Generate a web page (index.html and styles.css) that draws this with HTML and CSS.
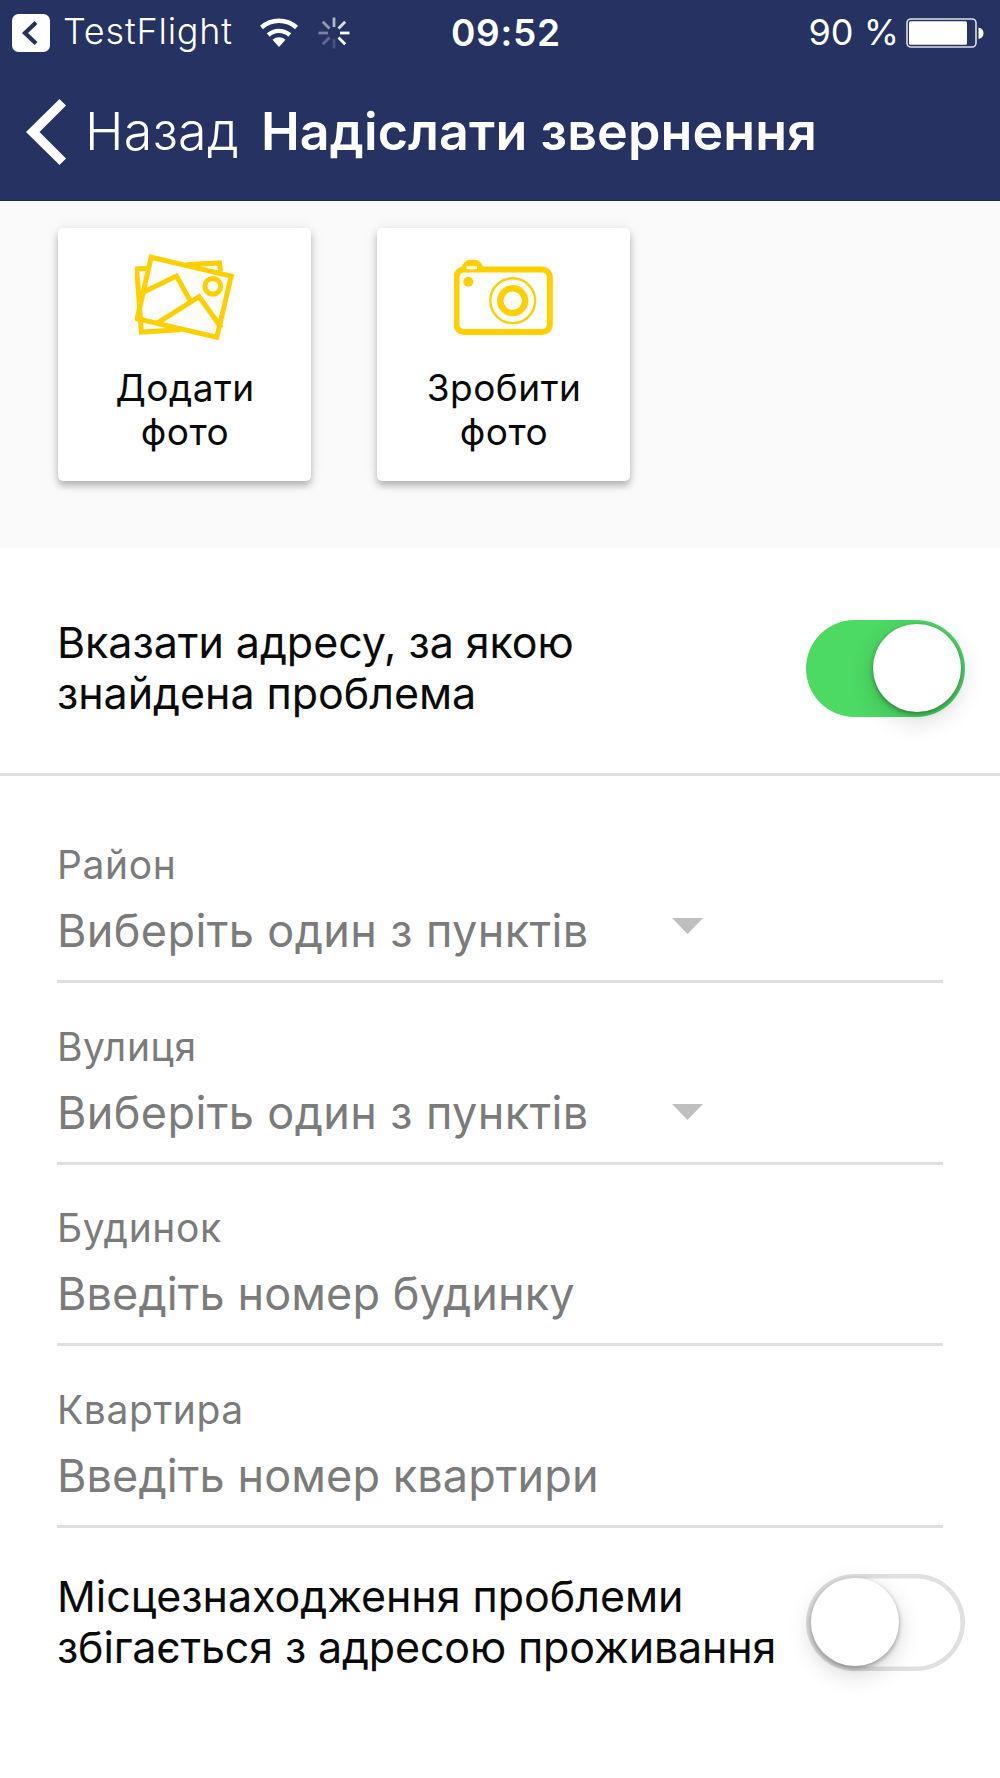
FILE: index.html
```html
<!DOCTYPE html>
<html lang="uk">
<head>
<meta charset="utf-8">
<title>Надіслати звернення</title>
<link rel="stylesheet" href="styles.css">
</head>
<body>
<div id="wrap">
    <div class="header">
        <div class="status">
            <div class="status-left">
                <svg class="back-app" viewBox="0 0 38 38"><rect width="38" height="38" rx="6.5" fill="#fff"/><path d="M24 8.5 L13 19 L24 29.5" fill="none" stroke="#253262" stroke-width="4.2"/></svg>
                <span class="app-name">TestFlight</span>
                <svg class="wifi" viewBox="0 0 40 30"><path d="M2.5 9.5 A26.2 26.2 0 0 1 37.5 9.5 M9.2 17 A16.2 16.2 0 0 1 30.8 17" fill="none" stroke="#fff" stroke-width="4.4"/><path d="M20 29 L13.5 21.7 A9.8 9.8 0 0 1 26.5 21.7 Z" fill="#fff"/></svg>
                <svg class="spinner" viewBox="-16 -16 32 32">
                    <g stroke="#fff" stroke-width="2.8">
                        <path d="M6 0 H15.5"/>
                        <path d="M4.5 4.5 L11.2 11.2"/>
                        <path d="M0 6 V15.5" opacity=".15"/>
                        <path d="M-4.5 4.5 L-11.2 11.2" opacity=".28"/>
                        <path d="M-6 0 H-15.5" opacity=".4"/>
                        <path d="M-4.5 -4.5 L-11.2 -11.2" opacity=".5"/>
                        <path d="M0 -6 V-15.5" opacity=".65"/>
                        <path d="M4.5 -4.5 L11.2 -11.2" opacity=".85"/>
                    </g>
                </svg>
            </div>
            <div class="time">09:52</div>
            <div class="status-right">
                <span>90 %</span>
                <svg class="battery" viewBox="0 0 78 30"><rect x="1" y="1" width="69" height="28" rx="4" fill="none" stroke="#fff" stroke-opacity=".85" stroke-width="1.6"/><rect x="3" y="3.2" width="58" height="23.6" rx="1.5" fill="#fff"/><path d="M72.5 9.5 Q77.5 10.5 77.5 15.2 Q77.5 20 72.5 21 Z" fill="#fff"/></svg>
            </div>
        </div>
        <div class="nav">
            <svg class="nav-arrow" viewBox="0 0 40 66"><path d="M33.5 0 L40 6.5 L13.5 33 L40 59.5 L33.5 66 L0 33 Z" fill="#fff"/></svg>
            <span class="nav-back">Назад</span>
            <span class="nav-title">Надіслати звернення</span>
        </div>
    </div>

    <div class="photos">
        <div class="card">
            <svg viewBox="0.5 -1 100 88" fill="none" stroke="#ffcf00" stroke-width="5">
                <path d="M16.7 2.3 L96.7 21 L82.3 82.2 L2.7 63.7 Z"/>
                <path d="M13 13.3 L2.2 14 L6.9 77 L46 74.8"/>
                <path d="M51.7 9.7 L85 7.9 L86 16"/>
                <path d="M7.7 37.7 L42 21 L55.7 45.7"/>
                <path d="M22.3 68.3 L64.7 41.7 L87 73"/>
                <circle cx="78.3" cy="31.3" r="7.9"/>
            </svg>
            <div class="card-label">Додати<br>фото</div>
        </div>
        <div class="card">
            <svg viewBox="0.5 0 100 88" fill="none" stroke="#ffcf00">
                <rect x="3" y="15.4" width="93.3" height="62.6" rx="7.5" stroke-width="6"/>
                <path d="M7 15.5 Q10 5.8 17 5.8 H21.5 Q28 6 30.5 15.5 Z" fill="#ffcf00" stroke="none"/>
                <rect x="13" y="12.3" width="10.5" height="3" fill="#fff" stroke="none"/>
                <circle cx="14.8" cy="27.7" r="5" fill="#ffcf00" stroke="none"/>
                <circle cx="59.2" cy="46.7" r="22.4" stroke-width="2.4"/>
                <circle cx="59.2" cy="46.7" r="12.4" stroke-width="6.4"/>
            </svg>
            <div class="card-label">Зробити<br>фото</div>
        </div>
    </div>

    <div class="row row-address">
        <div class="row-text">Вказати адресу, за якою<br>знайдена проблема</div>
        <div class="switch on"><div class="knob"></div></div>
    </div>

    <div class="fields">
        <div class="field">
            <div class="label">Район</div>
            <div class="value"><span class="choice">Виберіть один з пунктів</span><svg class="arrow" viewBox="0 0 31 16"><path d="M0 0 H31 L15.5 16 Z" fill="#bfbfbf"/></svg></div>
        </div>
        <div class="field">
            <div class="label">Вулиця</div>
            <div class="value"><span class="choice">Виберіть один з пунктів</span><svg class="arrow arrow-low" viewBox="0 0 31 16"><path d="M0 0 H31 L15.5 16 Z" fill="#bfbfbf"/></svg></div>
        </div>
        <div class="field">
            <div class="label">Будинок</div>
            <div class="value">Введіть номер будинку</div>
        </div>
        <div class="field">
            <div class="label">Квартира</div>
            <div class="value">Введіть номер квартири</div>
        </div>
    </div>

    <div class="row row-live">
        <div class="row-text">Місцезнаходження проблеми<br><span class="tight">збігається з адресою проживання</span></div>
        <div class="switch"><div class="knob"></div></div>
    </div>
</div>
</body>
</html>
```

FILE: styles.css
```css
* {box-sizing: border-box;}
body {margin: 0; background: #fff; font-family: Inter, "Liberation Sans", sans-serif; color: #0a0a0a;}
svg {display: block; flex: none;}
#wrap {width: 1000px; height: 1778px; overflow: hidden;}

.header {height: 201px; background: #253262; color: #fff; border-bottom: 1px solid #1b2555;}
.status {display: grid; grid-template-columns: 439px 110px 1fr; height: 63px; padding: 0 16px 0 12px; white-space: nowrap;}
.status-left {display: flex; align-items: center;}
.back-app {width: 38px; height: 38px;}
.app-name {width: 172px; margin-left: 13px; padding-bottom: 3px; font-size: 36px; font-weight: 350; letter-spacing: 0.8px;}
.wifi {width: 40px; height: 30px; margin-left: 24px;}
.spinner {width: 32px; height: 32px; margin-left: 19px;}
.time {font-size: 37px; line-height: 65px; font-weight: 600; letter-spacing: 0.7px;}
.status-right {display: flex; align-items: center; justify-content: flex-end; gap: 7px; font-size: 36px; line-height: 65px;}
.battery {width: 78px; height: 30px;}

.nav {display: flex; align-items: center; height: 137px; padding-left: 26px; font-size: 52px; white-space: nowrap;}
.nav-arrow {width: 40px; height: 66px;}
.nav-back {width: 176px; margin-left: 19px; font-weight: 330; letter-spacing: 0.3px;}
.nav-title {font-weight: 600; letter-spacing: 0.1px;}

.photos {display: flex; gap: 66px; height: 347px; padding: 27px 58px 0; background: #fafafa;}
.card {display: flex; flex-direction: column; align-items: center; width: 253px; height: 253px; padding-top: 26px; background: #fff; border-radius: 5px; box-shadow: 0 5px 7px rgba(0,0,0,0.25), 0 0 14px rgba(0,0,0,0.08);}
.card svg {width: 100px; height: 88px;}
.card-label {margin-top: 24px; padding-left: 1px; font-size: 37px; line-height: 44px; letter-spacing: 0.5px; text-align: center;}

.row {display: flex; justify-content: space-between; align-items: center; padding-left: 57px; padding-right: 35px;}
.row-text {font-size: 43px; line-height: 51.5px; white-space: nowrap; letter-spacing: -0.05px;}
.tight {letter-spacing: -0.15px;}
.row-address {height: 228px; padding-top: 15px; border-bottom: 3px solid #e0e0e0;}
.row-live {padding-top: 43px;}

.switch {width: 159px; height: 97px; padding: 4.5px; border-radius: 49px; box-shadow: inset 0 0 0 4.5px #e0e0e0;}
.knob {width: 88px; height: 88px; border-radius: 50%; background: #fff; box-shadow: 0 8px 24px rgba(0,0,0,0.16), 0 2px 5px rgba(0,0,0,0.35);}
.switch.on {background: #4cd964; box-shadow: none;}
.switch.on .knob {margin-left: 62px;}

.fields {padding: 25.5px 57px 0; color: #7b7b7b;}
.field {height: 181.5px; padding-top: 33.5px; border-bottom: 3px solid #e0e0e0;}
.label {font-size: 39px; line-height: 60px; letter-spacing: 0.6px;}
.value {display: flex; align-items: center; height: 71px; font-size: 45px; line-height: 71px; letter-spacing: 0.1px; white-space: nowrap;}
.choice {width: 615px; letter-spacing: 0.38px;}
.arrow {width: 31px; height: 16px; margin-bottom: 9px;}
.arrow-low {margin-bottom: 0; margin-top: 0;}
```
